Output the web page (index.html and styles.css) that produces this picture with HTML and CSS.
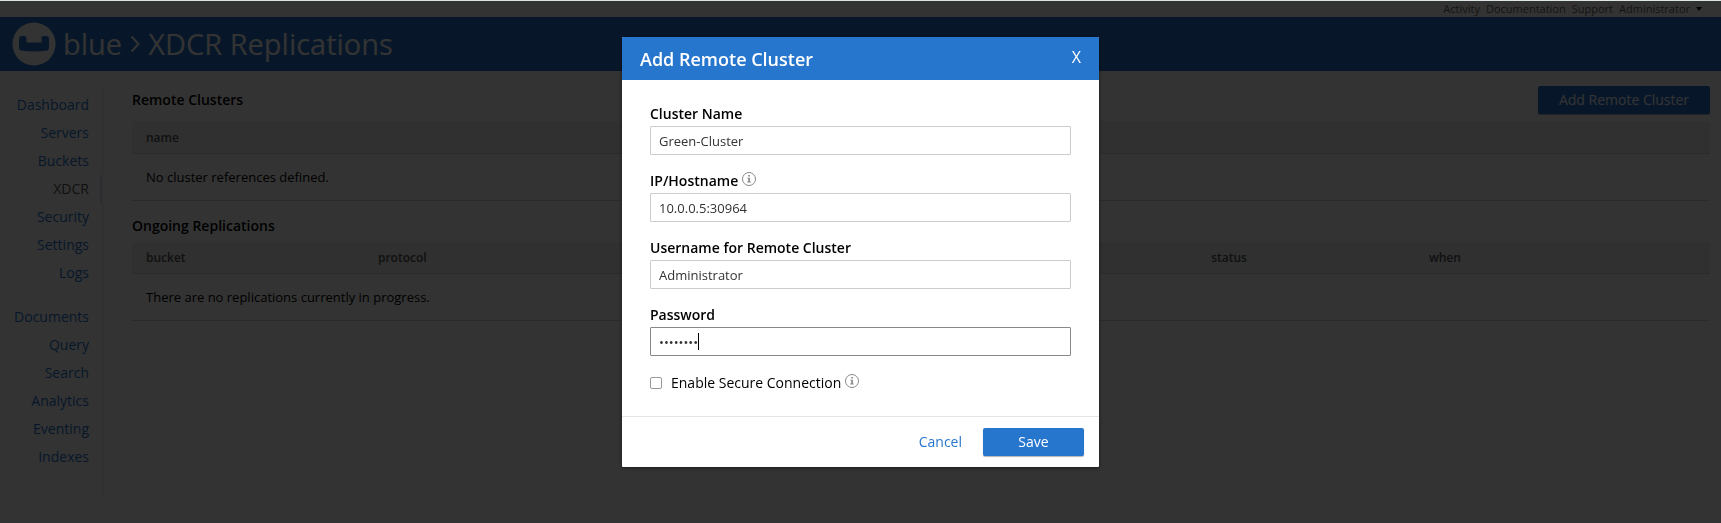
FILE: index.html
```html
<!DOCTYPE html>
<html lang="en">
<head>
<meta charset="utf-8">
<title>XDCR Replications</title>
<link rel="stylesheet" href="styles.css">
</head>
<body>
<div class="app">
  <nav class="topbar" aria-label="Account">
    <a href="#">Activity</a>
    <a href="#">Documentation</a>
    <a href="#">Support</a>
    <a href="#" class="user">Administrator
      <svg class="caret" viewBox="0 0 6 4" aria-hidden="true"><path d="M0 0h6L3 4z"/></svg>
    </a>
  </nav>
  <header class="masthead">
    <svg class="logo" viewBox="0 0 44 44" aria-hidden="true">
      <circle cx="22" cy="22" r="21.5" fill="#fff"/>
      <path d="M10 14h2.500q2 0 2 2v4.500h15v-4.500q0-2 2-2h2.500q3 0 3 3v8.500q0 3-3 3.300q-12 1.200-24 0q-3-.3-3-3.300v-8.500q0-3 3-3z" fill="#2776ce"/>
    </svg>
    <h1 class="title">
      <span>blue</span>
      <svg class="chevron" viewBox="0 0 10 18" aria-hidden="true"><path d="M1.500 1.500L8.500 9l-7 7.500"/></svg>
      <span>XDCR Replications</span>
    </h1>
  </header>
  <div class="body">
    <nav class="sidebar" aria-label="Main">
      <ul class="nav-group">
        <li><a href="#">Dashboard</a></li>
        <li><a href="#">Servers</a></li>
        <li><a href="#">Buckets</a></li>
        <li><a href="#" class="current" aria-current="page">XDCR</a></li>
        <li><a href="#">Security</a></li>
        <li><a href="#">Settings</a></li>
        <li><a href="#">Logs</a></li>
      </ul>
      <ul class="nav-group">
        <li><a href="#">Documents</a></li>
        <li><a href="#">Query</a></li>
        <li><a href="#">Search</a></li>
        <li><a href="#">Analytics</a></li>
        <li><a href="#">Eventing</a></li>
        <li><a href="#">Indexes</a></li>
      </ul>
    </nav>
    <main class="content">
      <div class="section-head">
        <h2>Remote Clusters</h2>
        <button type="button" class="btn btn-add">Add Remote Cluster</button>
      </div>
      <table class="grid">
        <thead><tr><th scope="col">name</th></tr></thead>
        <tbody><tr><td>No cluster references defined.</td></tr></tbody>
      </table>
      <div class="section-head">
        <h2>Ongoing Replications</h2>
      </div>
      <table class="grid replications">
        <colgroup><col class="c-bucket"><col class="c-protocol"><col class="c-status"><col class="c-when"></colgroup>
        <thead><tr><th scope="col">bucket</th><th scope="col">protocol</th><th scope="col">status</th><th scope="col">when</th></tr></thead>
        <tbody><tr><td colspan="4">There are no replications currently in progress.</td></tr></tbody>
      </table>
    </main>
  </div>
</div>

<div class="backdrop">
  <form class="dialog" role="dialog" aria-labelledby="dialog-title">
    <div class="dialog-head">
      <h2 id="dialog-title">Add Remote Cluster</h2>
      <button type="button" class="close" aria-label="Close">X</button>
    </div>
    <div class="dialog-body">
      <div class="field">
        <label for="name">Cluster Name</label>
        <input id="name" type="text" value="Green-Cluster">
      </div>
      <div class="field">
        <label for="host">IP/Hostname
          <svg class="info" viewBox="0 0 14 14" aria-hidden="true"><circle cx="7" cy="7" r="6.500"/><path d="M6.200 3h1.700v1.500H6.200zM5.300 5.700h2.600v3.800h.9v.9H5.200v-.9h1V6.600h-.9z"/></svg>
        </label>
        <input id="host" type="text" value="10.0.0.5:30964">
      </div>
      <div class="field">
        <label for="user">Username for Remote Cluster</label>
        <input id="user" type="text" value="Administrator">
      </div>
      <div class="field password">
        <label for="pass">Password</label>
        <input id="pass" type="password" value="password" autofocus>
        <span class="text-cursor" aria-hidden="true"></span>
      </div>
      <div class="check">
        <input id="secure" type="checkbox">
        <label for="secure">Enable Secure Connection
          <svg class="info" viewBox="0 0 14 14" aria-hidden="true"><circle cx="7" cy="7" r="6.500"/><path d="M6.200 3h1.700v1.500H6.200zM5.300 5.700h2.600v3.800h.9v.9H5.200v-.9h1V6.600h-.9z"/></svg>
        </label>
      </div>
    </div>
    <div class="dialog-foot">
      <a href="#" class="cancel">Cancel</a>
      <button type="submit" class="btn btn-save">Save</button>
    </div>
  </form>
</div>
</body>
</html>
```

FILE: styles.css
```css
* { box-sizing: border-box; }

body {
  margin: 0;
  min-height: 100vh;
  border-top: 1px solid #dce4e6;
  font: 14px/20px "Open Sans", "Noto Sans", sans-serif;
  color: #000;
  background: #fff;
}

a { color: #2776ce; text-decoration: none; }
h1, h2, ul { margin: 0; padding: 0; font-weight: 400; }
ul { list-style: none; }
button, input { font: inherit; margin: 0; }

.topbar {
  display: flex;
  justify-content: flex-end;
  gap: 6px;
  height: 16px;
  padding-right: 19px;
  font-size: 11px;
  line-height: 16px;
}
.topbar a { color: #666; }
.user { display: flex; align-items: center; gap: 6px; }
.caret { width: 6px; height: 4px; fill: #000; }

.masthead {
  display: flex;
  align-items: center;
  gap: 7px;
  height: 54px;
  padding-left: 12px;
  background: #2776ce;
}
.logo { width: 44px; height: 44px; }
.title {
  display: flex;
  align-items: center;
  gap: 8px;
  color: #fff;
  font-size: 29px;
  line-height: 38px;
}
.chevron { width: 10px; height: 18px; fill: none; stroke: #fff; stroke-width: 2; }

.body { display: flex; padding: 15px 11px 0 0; }

.sidebar {
  width: 103px;
  height: 413px;
  padding-top: 5px;
  border-right: 1px solid #e6e6e6;
}
.nav-group + .nav-group { margin-top: 16px; }
.nav-group a {
  display: block;
  padding-right: 11px;
  border-right: 2px solid transparent;
  line-height: 28px;
  text-align: right;
}
.nav-group .current { color: #555; border-color: #d4e0f0; }

.content { flex: 1; padding-left: 29px; }
.section-head {
  display: flex;
  justify-content: space-between;
  align-items: flex-start;
}
.section-head h2 { font-size: 14px; font-weight: 600; line-height: 28px; }

.btn {
  border: 0;
  border-radius: 2px;
  color: #fff;
  background: #2776ce;
  line-height: 20px;
  box-shadow: 0 1px 1px rgba(0, 0, 0, 0.3);
}
.btn-add { width: 172px; padding: 4px 0; }

.grid {
  width: 100%;
  margin: 7px 0 11px;
  border-collapse: collapse;
  table-layout: fixed;
  font-size: 13px;
}
.section-head + .grid.replications { margin-top: 2px; }
.grid th {
  height: 32px;
  padding: 2px 14px 0;
  border-bottom: 1px solid #d8d8d8;
  background: #eee;
  color: #555;
  font-size: 12px;
  font-weight: 600;
  text-align: left;
}
.grid td { height: 47px; padding: 0 14px; border-bottom: 1px solid #d8d8d8; }
.c-bucket { width: 14.7%; }
.c-protocol { width: 52.8%; }
.c-status { width: 13.8%; }

.backdrop {
  position: fixed;
  inset: 1px 0 0;
  display: flex;
  justify-content: center;
  align-items: flex-start;
  padding-top: 36px;
  background: rgba(0, 0, 0, 0.8);
}
.dialog {
  width: 477px;
  background: #fff;
  border-radius: 1px;
  box-shadow: 0 1px 4px rgba(0, 0, 0, 0.5);
}
.dialog-head {
  display: flex;
  justify-content: space-between;
  align-items: center;
  height: 43px;
  padding: 0 18px;
  color: #fff;
  background: #2776ce;
  border-radius: 1px 1px 0 0;
}
.dialog-head h2 { font-size: 18px; font-weight: 600; line-height: 24px; }
.close {
  padding: 0 0 4px;
  border: 0;
  color: #fff;
  background: none;
  font-size: 16px;
}
.dialog-body { padding: 24px 28px 23px; }
.field { margin-bottom: 16px; }
.field label { display: block; height: 22px; font-weight: 600; }
.info { width: 14px; height: 14px; fill: #888; }
.info circle { fill: none; stroke: #888; }
.field input {
  display: block;
  width: 100%;
  height: 29px;
  padding: 0 8px;
  border: 1px solid #ccc;
  border-radius: 1px;
  outline: 0;
  color: #333;
  background: #fff;
  font-size: 13px;
}
.field input:focus { border-color: #888; }
.password { position: relative; }
.password input { border-color: #888; caret-color: transparent; }
.text-cursor {
  position: absolute;
  left: 48px;
  bottom: 6px;
  width: 1px;
  height: 17px;
  background: #000;
}

.check { display: flex; align-items: center; gap: 9px; padding-top: 1px; }
.check input {
  appearance: none;
  width: 12px;
  height: 12px;
  border: 1px solid #999;
  border-radius: 2px;
  background: #fff;
}
.dialog-foot {
  display: flex;
  justify-content: flex-end;
  align-items: center;
  gap: 21px;
  padding: 11px 15px;
  border-top: 1px solid #e5e5e5;
}
.btn-save { width: 101px; padding: 4px 0; }
```
